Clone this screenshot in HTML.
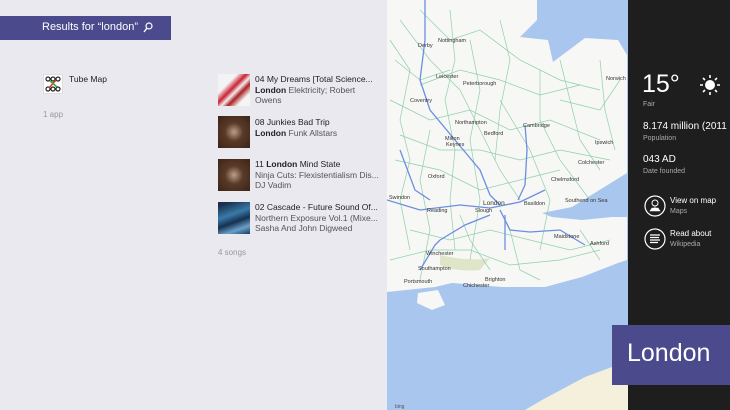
<!DOCTYPE html>
<html><head><meta charset="utf-8"><style>
*{margin:0;padding:0;box-sizing:border-box}
body{width:730px;height:410px;overflow:hidden;background:#e9e9ef;font-family:"Liberation Sans",sans-serif;position:relative}
.a{position:absolute}
.hdr{left:0;top:16px;width:171px;height:24px;background:#4b4a8c;color:#fff;font-size:11px;padding:5px 0 0 42px}
.t{font-size:8.5px;color:#222;line-height:10.6px;white-space:nowrap}
.t span{color:#555}
.g{color:#999;font-size:8px}
.art{width:32px;height:32px}
.rp{left:628px;top:0;width:102px;height:410px;background:#1e1e1e;color:#fff}
.s{color:#aaa;font-size:7px}
</style></head><body>
<div class="a hdr">Results for “london”</div>
<svg class="a" style="left:143px;top:22px" width="10" height="11"><circle cx="6" cy="4" r="3" fill="none" stroke="#fff" stroke-width="1.2"/><path d="M4 6L1 10" stroke="#fff" stroke-width="1.4"/></svg>
<div class="a" style="left:43px;top:74px;width:20px;height:20px;background:#fff;border:1px solid #ddd">
<svg width="18" height="18" viewBox="0 0 18 18"><g fill="none" stroke="#222" stroke-width="1.2"><circle cx="4" cy="4" r="2"/><circle cx="9" cy="4" r="2"/><circle cx="14" cy="4" r="2"/><circle cx="4" cy="14" r="2"/><circle cx="9" cy="14" r="2"/><circle cx="14" cy="14" r="2"/></g><path d="M5 13 L12 5" stroke="#d33" stroke-width="1.5"/><path d="M6 6 L13 12" stroke="#3a3" stroke-width="1.5"/></svg></div>
<div class="a t" style="left:69px;top:74px">Tube Map</div>
<div class="a g" style="left:43px;top:110px">1 app</div>

<div class="a art" style="left:218px;top:74px;background:linear-gradient(135deg,#f3f3f3 30%,#c23 45%,#eee 55%,#a22 65%,#f5f5f5 80%)"></div>
<div class="a art" style="left:218px;top:116px;background:radial-gradient(circle at 50% 50%,#b9a08a 0,#5a3a28 40%,#3b2418 100%)"></div>
<div class="a art" style="left:218px;top:159px;background:radial-gradient(circle at 50% 50%,#b9a08a 0,#5a3a28 40%,#3b2418 100%)"></div>
<div class="a art" style="left:218px;top:202px;background:linear-gradient(160deg,#1a3050 10%,#3a7aa8 40%,#163050 60%,#6aa0c8 80%,#1a3a60)"></div>

<div class="a t" style="left:255px;top:74px">04 My Dreams [Total Science...<br><b>London</b> <span>Elektricity; Robert</span><br><span>Owens</span></div>
<div class="a t" style="left:255px;top:117px">08 Junkies Bad Trip<br><b>London</b> <span>Funk Allstars</span></div>
<div class="a t" style="left:255px;top:159px">11 <b>London</b> Mind State<br><span>Ninja Cuts: Flexistentialism Dis...</span><br><span>DJ Vadim</span></div>
<div class="a t" style="left:255px;top:202px">02 Cascade - Future Sound Of...<br><span>Northern Exposure Vol.1 (Mixe...</span><br><span>Sasha And John Digweed</span></div>
<div class="a g" style="left:218px;top:248px">4 songs</div>

<svg class="a" style="left:387px;top:0" width="241" height="410" viewBox="387 0 241 410">
<rect x="387" y="0" width="241" height="410" fill="#a9c6ee"/>
<path d="M387 0 L537 0 L537 20 L520 37 L548 40 L553 62 L585 38 L618 40 L627 55 L627 173 L572 207 L542 213 L552 217 L582 220 L612 217 L627 217 L627 260 L618 263 L582 277 L545 287 L502 287 L452 283 L435 287 L387 292 Z" fill="#f7f7f5"/>
<path d="M418 293 L438 290 L445 305 L432 310 L417 303 Z" fill="#f7f7f5"/>
<path d="M525 410 L542 400 L585 377 L612 367 L628 362 L628 410 Z" fill="#f5f0dc"/>
<path d="M440 255 Q470 262 490 258 L480 270 Q455 272 440 265Z" fill="#dfe5c8"/>
<g fill="none" stroke="#8fd0a8" stroke-width="0.7">
<path d="M400 20 L430 60 L460 90 L480 130 L500 170 L520 200"/><path d="M420 10 L450 40 L480 30 L520 60 L560 80 L600 90"/><path d="M390 100 L430 120 L470 110 L510 130 L550 120 L600 140"/><path d="M395 160 L440 170 L480 190 L520 180 L560 170"/><path d="M410 230 L450 240 L490 230 L530 240 L570 250 L610 240"/><path d="M470 40 L480 90 L470 140 L480 200 L470 260"/><path d="M540 70 L540 120 L560 160 L590 200"/><path d="M430 130 L420 180 L430 230 L420 280"/><path d="M560 100 L600 110 L620 80"/><path d="M500 100 L530 150 L550 200 L540 250"/><path d="M395 60 L420 80 L450 70"/><path d="M580 230 L600 260"/>
<path d="M390 40 L410 70 L400 120 L410 160 L400 200 L410 250"/><path d="M450 10 L455 60 L445 100 L455 150 L450 200 L455 250"/><path d="M500 20 L510 60 L500 110 L495 160"/><path d="M560 60 L570 100 L580 140 L600 170"/><path d="M600 60 L605 110 L615 150"/><path d="M400 135 L440 150 L480 150 L520 160 L560 150 L610 160"/><path d="M390 260 L430 250 L470 250 L510 265 L560 260 L600 250"/><path d="M420 85 L460 70 L500 80 L540 95 L580 85"/><path d="M510 230 L520 270 L540 280"/><path d="M460 215 L470 240 L490 270"/></g>
<g fill="none" stroke="#6b8fe0" stroke-width="1.3">
<path d="M425 0 L425 40 L420 80 L430 110 L455 140 L480 170 L490 195 L500 205"/><path d="M525 125 L527 150 L525 185 L518 200"/><path d="M387 200 L420 210 L460 205 L490 208 L520 202 L545 190"/><path d="M500 210 L510 230 L530 232 L560 230 L585 245"/><path d="M440 240 L465 225 L490 215"/><path d="M420 270 L435 245 L440 240"/><path d="M505 215 L505 250"/><path d="M400 150 L415 190 L430 200"/></g>
<g font-size="5.5" fill="#333" font-family="Liberation Sans,sans-serif">
<text x="438" y="42">Nottingham</text><text x="418" y="47">Derby</text><text x="436" y="78">Leicester</text><text x="463" y="85">Peterborough</text><text x="410" y="102">Coventry</text><text x="455" y="124">Northampton</text><text x="523" y="127">Cambridge</text><text x="484" y="135">Bedford</text><text x="445" y="140">Milton</text><text x="446" y="146">Keynes</text><text x="428" y="178">Oxford</text><text x="595" y="144">Ipswich</text><text x="578" y="164">Colchester</text><text x="551" y="181">Chelmsford</text><text x="483" y="205" font-size="6.5">London</text><text x="524" y="205">Basildon</text><text x="427" y="212">Reading</text><text x="475" y="212">Slough</text><text x="565" y="202">Southend on Sea</text><text x="554" y="238">Maidstone</text><text x="426" y="255">Winchester</text><text x="418" y="270">Southampton</text><text x="404" y="283">Portsmouth</text><text x="463" y="287">Chichester</text><text x="485" y="281">Brighton</text><text x="606" y="80">Norwich</text><text x="389" y="199">Swindon</text><text x="590" y="245">Ashford</text></g>
<text x="395" y="408" font-size="5" fill="#555">bing</text>
</svg>

<div class="a rp">
<div class="a" style="left:14px;top:70px;font-size:25px;font-weight:300;line-height:28px">15°</div>
<svg class="a" style="left:72px;top:75px" width="20" height="20" viewBox="0 0 20 20"><circle cx="10" cy="10" r="5" fill="#fff"/><g stroke="#fff" stroke-width="1.6"><path d="M10 0v3M10 17v3M0 10h3M17 10h3M3 3l2 2M15 15l2 2M3 17l2-2M15 5l2-2"/></g></svg>
<div class="a s" style="left:15px;top:101px">Fair</div>
<div class="a" style="left:15px;top:121px;font-size:10px;white-space:nowrap">8.174 million (2011</div>
<div class="a s" style="left:15px;top:135px">Population</div>
<div class="a" style="left:15px;top:154px;font-size:10px">043 AD</div>
<div class="a s" style="left:15px;top:168px">Date founded</div>
<svg class="a" style="left:16px;top:195px" width="22" height="22"><circle cx="11" cy="11" r="10" fill="none" stroke="#fff" stroke-width="1.2"/><circle cx="11" cy="8" r="3" fill="none" stroke="#fff"/><path d="M11 11v3M6 16h10l-2-3H8z" fill="#fff" stroke="#fff" stroke-width=".6"/></svg>
<div class="a" style="left:42px;top:196px;font-size:8px;line-height:10px">View on map<br><span style="color:#aaa;font-size:7px">Maps</span></div>
<svg class="a" style="left:16px;top:228px" width="22" height="22"><circle cx="11" cy="11" r="10" fill="none" stroke="#fff" stroke-width="1.2"/><path d="M6 7h10M6 9.5h9M6 12h10M6 14.5h8" stroke="#fff" stroke-width="1.2"/></svg>
<div class="a" style="left:42px;top:229px;font-size:8px;line-height:10px">Read about<br><span style="color:#aaa;font-size:7px">Wikipedia</span></div>
</div>
<div class="a" style="left:612px;top:325px;width:118px;height:60px;background:#4b4a8c;color:#fff;font-size:25px;font-weight:300;padding:14px 0 0 15px">London</div>
</body></html>
